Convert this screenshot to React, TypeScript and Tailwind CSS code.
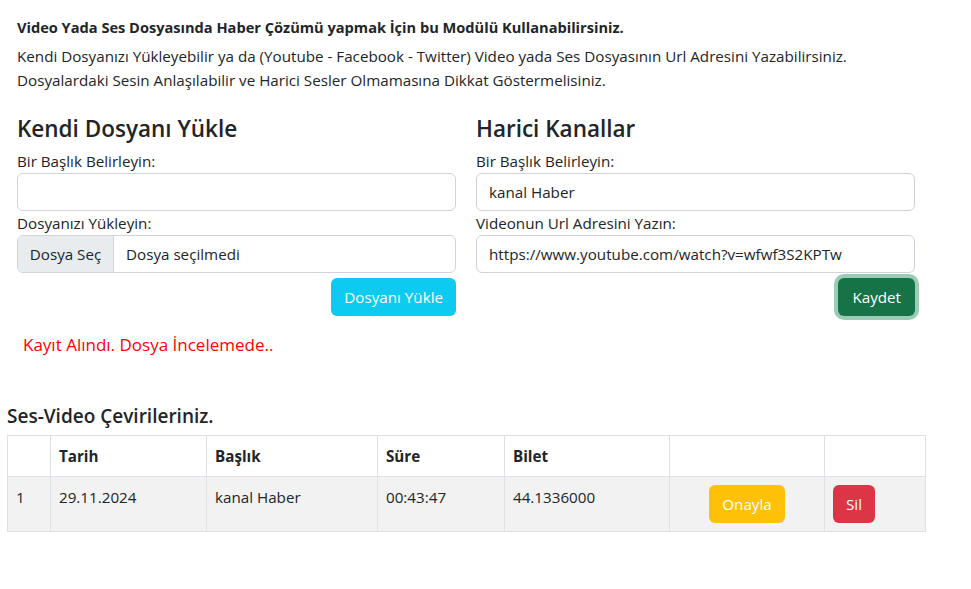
export default function App() {
  const cell = "border border-[#dee2e6] px-2 py-2 align-top";
  return (
    <div className="min-h-screen bg-white text-[#212529] font-['Open_Sans',sans-serif] text-[15.2px]">
      <div className="w-[918px] ml-[7px]">
        <div className="px-[10px] pt-[15px]">
          <p className="font-bold text-[14.6px] leading-6">
            Video Yada Ses Dosyasında Haber Çözümü yapmak İçin bu Modülü Kullanabilirsiniz.
          </p>
          <p className="mt-[5px] leading-6">
            Kendi Dosyanızı Yükleyebilir ya da (Youtube - Facebook - Twitter) Video yada Ses Dosyasının Url Adresini Yazabilirsiniz.
            <br />
            Dosyalardaki Sesin Anlaşılabilir ve Harici Sesler Olmamasına Dikkat Göstermelisiniz.
          </p>
        </div>
        <div className="grid grid-cols-2 mt-[22px]">
          <div className="px-[10px]">
            <h3 className="text-[22.5px] font-semibold leading-[29px] mb-[6px]">Kendi Dosyanı Yükle</h3>
            <label className="block leading-6">Bir Başlık Belirleyin:</label>
            <div className="h-[38px] w-full border border-[#ced4da] rounded-md"></div>
            <label className="block leading-6">Dosyanızı Yükleyin:</label>
            <div className="flex h-[38px] border border-[#ced4da] rounded-md overflow-hidden">
              <div className="w-[96px] bg-[#e9ecef] border-r border-[#ced4da] flex items-center justify-center">Dosya Seç</div>
              <div className="flex items-center px-3">Dosya seçilmedi</div>
            </div>
            <div className="flex justify-end mt-[5px]">
              <button className="h-[38px] px-[13px] bg-[#0dcaf0] text-white rounded-md">Dosyanı Yükle</button>
            </div>
            <p className="text-[#ff0000] text-[17px] leading-7 ml-[6px] mt-[15px]">Kayıt Alındı. Dosya İncelemede..</p>
          </div>
          <div className="px-[10px]">
            <h3 className="text-[22.5px] font-semibold leading-[29px] mb-[6px]">Harici Kanallar</h3>
            <label className="block leading-6">Bir Başlık Belirleyin:</label>
            <div className="h-[38px] w-full border border-[#ced4da] rounded-md flex items-center px-3">kanal Haber</div>
            <label className="block leading-6">Videonun Url Adresini Yazın:</label>
            <div className="h-[38px] w-full border border-[#ced4da] rounded-md flex items-center px-3">
              https://www.youtube.com/watch?v=wfwf3S2KPTw
            </div>
            <div className="flex justify-end mt-[5px]">
              <button className="h-[38px] px-[14px] bg-[#157347] text-white rounded-md shadow-[0_0_0_4px_rgba(60,153,110,0.5)]">Kaydet</button>
            </div>
          </div>
        </div>
        <h5 className="text-[19px] font-semibold leading-6 mt-[45px] mb-[7px]">Ses-Video Çevirileriniz.</h5>
        <table className="w-[918px] table-fixed border-collapse">
          <colgroup>
            <col className="w-[43px]" />
            <col className="w-[156px]" />
            <col className="w-[171px]" />
            <col className="w-[127px]" />
            <col className="w-[165px]" />
            <col className="w-[155px]" />
            <col className="w-[101px]" />
          </colgroup>
          <thead>
            <tr className="leading-6 font-bold text-left">
              <th className={cell}></th>
              <th className={cell}>Tarih</th>
              <th className={cell}>Başlık</th>
              <th className={cell}>Süre</th>
              <th className={cell}>Bilet</th>
              <th className={cell}></th>
              <th className={cell}></th>
            </tr>
          </thead>
          <tbody>
            <tr className="bg-[#f2f2f2] leading-6">
              <td className={cell}>1</td>
              <td className={cell}>29.11.2024</td>
              <td className={cell}>kanal Haber</td>
              <td className={cell}>00:43:47</td>
              <td className={cell}>44.1336000</td>
              <td className={cell + " text-center"}>
                <button className="h-[38px] px-[13px] bg-[#ffc107] text-white rounded-md">Onayla</button>
              </td>
              <td className={cell}>
                <button className="h-[38px] px-[13px] bg-[#dc3545] text-white rounded-md">Sil</button>
              </td>
            </tr>
          </tbody>
        </table>
      </div>
    </div>
  );
}
